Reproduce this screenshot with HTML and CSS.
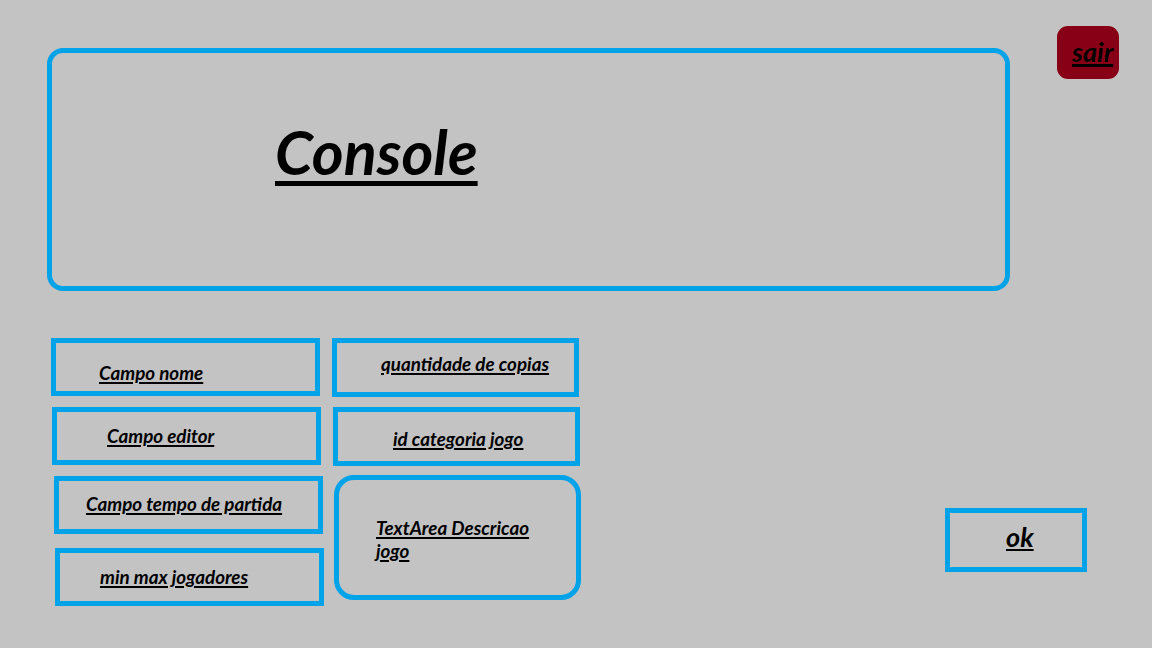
FILE: index.html
```html
<!DOCTYPE html>
<html>
<head>
  <meta charset="UTF-8">
  <title>Console</title>
  <link rel="stylesheet" href="styles.css">
</head>
<body>
  <div class="top-row">
    <div class="console-box">
      <span class="console-title">Console</span>
    </div>
    <button class="exit-btn">sair</button>
  </div>

  <div class="bottom-row">
    <div class="field-col left-col">
      <div class="field field-nome"><span>Campo nome</span></div>
      <div class="field field-editor"><span>Campo editor</span></div>
      <div class="field field-tempo"><span>Campo tempo de partida</span></div>
      <div class="field field-jogadores"><span>min max jogadores</span></div>
    </div>
    <div class="field-col right-col">
      <div class="field field-copias"><span>quantidade de copias</span></div>
      <div class="field field-categoria"><span>id categoria jogo</span></div>
      <div class="field field-descricao"><span>TextArea Descricao jogo</span></div>
    </div>
    <button class="ok-btn">ok</button>
  </div>
</body>
</html>
```

FILE: styles.css
```css
body {
  background: #c3c3c3;
  color: #000;
  font-family: 'Lato', 'Open Sans', sans-serif;
  font-weight: 700;
  font-style: italic;
  margin: 0;
  padding: 0;
  width: 1152px;
  height: 648px;
  overflow: hidden;
}
span, button {
  text-decoration: underline;
  text-decoration-thickness: 2px;
  text-underline-offset: 2px;
}
.top-row {
  display: flex;
  align-items: flex-start;
  padding: 26px 0 0 47px;
}
.console-box {
  box-sizing: border-box;
  width: 963px;
  height: 243px;
  margin-top: 22px;
  border: 5px solid #00a2e8;
  border-radius: 16px;
  padding: 62px 0 0 223px;
}
.console-title {
  display: block;
  width: max-content;
  font-size: 61px;
  line-height: 1.2;
  text-decoration-thickness: 5px;
  text-underline-offset: 6px;
}
/* buttons centre their content vertically, so only left padding is set */
.exit-btn {
  box-sizing: border-box;
  width: 62px;
  height: 53px;
  margin-left: 47px;
  background: #880015;
  border: none;
  border-radius: 11px;
  padding: 0 0 0 15px;
  text-align: left;
  font-family: inherit;
  font-weight: 700;
  font-style: italic;
  font-size: 27px;
  line-height: 1.2;
  color: #000;
  display: block;
  text-decoration-thickness: 3px;
}
.bottom-row {
  display: flex;
  align-items: flex-start;
  margin-top: 47px;
}
.field-col {
  display: flex;
  flex-direction: column;
}
.left-col {
  margin-left: 51px;
}
.right-col {
  margin-left: 8px;
}
.field {
  box-sizing: border-box;
  border: 5px solid #00a2e8;
  font-size: 18.8px;
  line-height: 20px;
}
.field span {
  display: block;
}
.left-col .field {
  width: 269px;
  height: 58px;
}
.right-col .field {
  width: 247px;
  height: 59px;
}
.field-nome {
  padding: 20px 0 0 43px;
}
.field-editor {
  margin-top: 11px;
  margin-left: 1px;
  padding: 14px 0 0 50px;
}
.field-tempo {
  margin-top: 11px;
  margin-left: 3px;
  padding: 13px 0 0 27px;
}
.field-jogadores {
  margin-top: 14px;
  margin-left: 4px;
  padding: 14px 0 0 40px;
}
.field-copias {
  padding: 11px 0 0 44px;
}
.field-categoria {
  margin-top: 10px;
  margin-left: 1px;
  padding: 17px 0 0 55px;
}
.right-col .field-descricao {
  margin-top: 9px;
  margin-left: 2px;
  height: 125px;
  border-radius: 20px;
  padding: 36px 40px 0 37px;
  line-height: 23px;
}
.ok-btn {
  box-sizing: border-box;
  width: 142px;
  height: 64px;
  margin: 170px 0 0 364px;
  background: transparent;
  border: 5px solid #00a2e8;
  border-radius: 0;
  padding: 0 0 6px 56px;
  text-align: left;
  font-family: inherit;
  font-weight: 700;
  font-style: italic;
  font-size: 27px;
  line-height: 1.2;
  color: #000;
  display: block;
}
```
